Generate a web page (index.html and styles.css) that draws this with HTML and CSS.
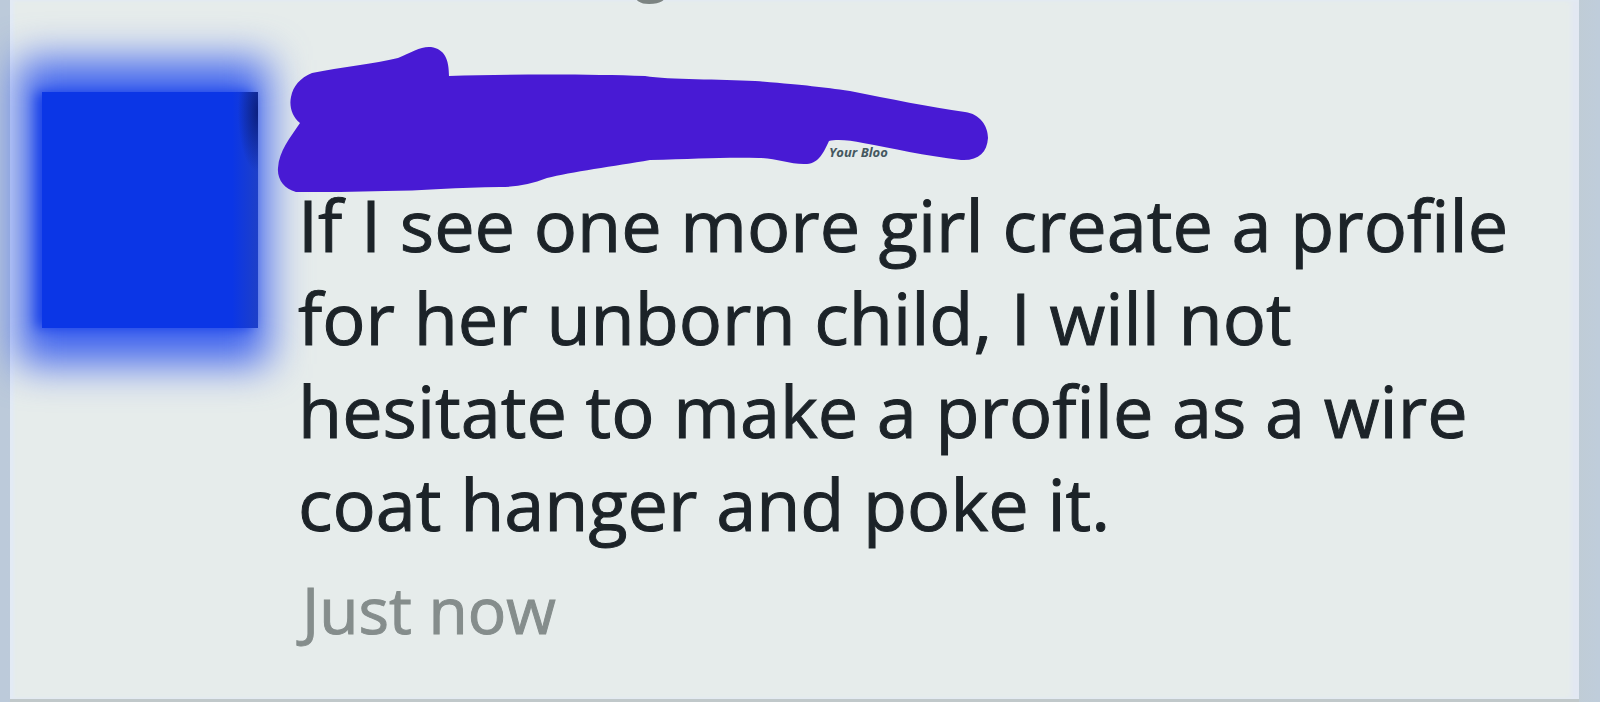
FILE: index.html
```
<!DOCTYPE html>
<html lang="en">
<head>
<meta charset="utf-8">
<meta name="viewport" content="width=device-width, initial-scale=1">
<title>Comment</title>
<link rel="stylesheet" href="styles.css">
</head>
<body>
<main class="feed">
  <p class="previous">g</p>
  <article class="comment">
    <div class="avatar"></div>
    <div class="content">
      <svg class="author" viewBox="270 40 730 160" role="img" aria-label="Hidden name">
        <text class="note" x="829" y="157">Your Bloo</text>
        <path fill="#481ad4" d="M312 73 C340 67 375 64 398 58 C412 52 421 46 431 47 C445 49 449 60 449 76 C510 74 590 74 645 76 C670 80 720 79 755 81 C805 85 820 87 850 91 C890 99 930 107 965 112 C980 114 988 126 988 138 C987 153 978 161 961 160 C925 156 892 148 863 143 C850 140 836 139 829 141 C824 152 819 163 807 164 C791 165 776 158 759 158 C725 157 695 159 650 160 C615 166 570 172 547 178 C531 184 517 187 500 187 C460 187 420 191 385 191 C355 192 325 192 296 192 C284 189 277 179 278 168 C279 151 290 138 300 123 C292 117 289 106 291 97 C293 86 300 78 312 73 Z"/>
      </svg>
      <p class="message">If I see one more girl create a profile<br>for her unborn child, I will not<br>hesitate to make a profile as a wire<br>coat hanger and poke it.</p>
      <time class="time">Just now</time>
    </div>
  </article>
</main>
</body>
</html>
```
FILE: styles.css
```
* {
  box-sizing: border-box;
}

body {
  margin: 0;
  min-height: 100vh;
  display: flex;
  background: linear-gradient(90deg, #bccada, #c0ccd4 98%, #bfcddb);
  font-family: "Open Sans", "Noto Sans", sans-serif;
  color: #1c2328;
}

.feed {
  position: relative;
  z-index: 0;
  flex: 1;
  min-width: 0;
  margin: 0 21px 0 10px;
  background: #e6eceb;
  border-bottom: 3px solid #c0c8ca;
  box-shadow: inset 4px 0 3px #e3ebf5, inset -8px 0 5px #e2e8f2;
}

.previous {
  display: flex;
  align-items: flex-end;
  height: 7px;
  margin: 0 0 0 624px;
  overflow: hidden;
  color: #7c8482;
  font-size: 64px;
  line-height: 84px;
}

.comment {
  display: flex;
  gap: 44px;
  padding: 33px 24px 40px 32px;
}

.avatar {
  position: relative;
  flex: none;
  width: 216px;
  height: 236px;
  margin-top: 52px;
}

.avatar::before,
.avatar::after {
  content: "";
  position: absolute;
}

.avatar::before {
  inset: -32px -10px -36px -24px;
  background: #4064ee;
  filter: blur(20px);
}

.avatar::after {
  inset: 0;
  background:
    radial-gradient(ellipse 20px 60px at 100% 20px, #0a1f80, transparent),
    linear-gradient(270deg, #1e40c8, #0b36e6 12%);
  box-shadow: -6px 0 12px 0 #1840e8;
}

.content {
  position: relative;
  flex: 1;
  min-width: 0;
}

.author {
  display: block;
  width: 730px;
  height: 160px;
  margin: 0 0 -22px -32px;
}

.note {
  fill: #45585f;
  font-size: 13px;
  font-weight: 700;
  font-style: italic;
}

.message {
  margin: 0 0 0 -4px;
  font-size: 72px;
  line-height: 93px;
  -webkit-text-stroke: 1px currentColor;
}

.time {
  display: block;
  margin-top: 16px;
  color: #858d8c;
  font-size: 64px;
  line-height: 88px;
  -webkit-text-stroke: 1px currentColor;
}
```
